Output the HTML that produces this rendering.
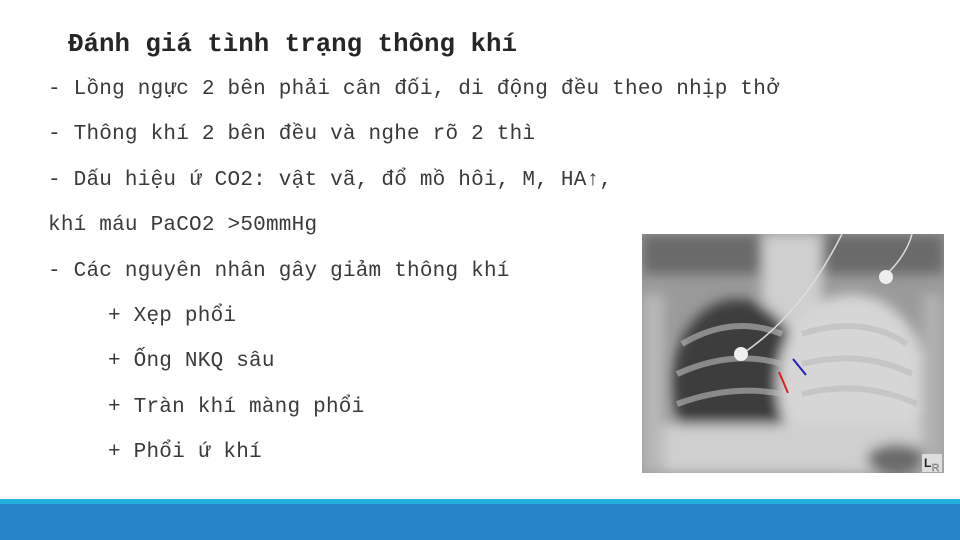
<!DOCTYPE html>
<html><head><meta charset="utf-8"><style>
body{margin:0;width:960px;height:540px;background:#fff;position:relative;overflow:hidden;font-family:"Liberation Mono","DejaVu Sans Mono",monospace;color:#3a3a3a}
.t{position:absolute;left:68px;top:30px;font-size:25.8px;font-weight:bold;color:#262626;white-space:pre}
.l{position:absolute;font-size:21px;white-space:pre;line-height:24px;letter-spacing:0.22px}
.bar1{position:absolute;left:0;top:499px;width:960px;height:5px;background:#27aee0}
.bar2{position:absolute;left:0;top:504px;width:960px;height:36px;background:#2683c6}
</style></head><body>
<div class="t">Đánh giá tình trạng thông khí</div>
<div class="l" style="left:48px;top:78px">- Lồng ngực 2 bên phải cân đối, di động đều theo nhịp thở</div>
<div class="l" style="left:48px;top:123px">- Thông khí 2 bên đều và nghe rõ 2 thì</div>
<div class="l" style="left:48px;top:169px">- Dấu hiệu ứ CO2: vật vã, đổ mồ hôi, M, HA↑,</div>
<div class="l" style="left:48px;top:214px">khí máu PaCO2 &gt;50mmHg</div>
<div class="l" style="left:48px;top:260px">- Các nguyên nhân gây giảm thông khí</div>
<div class="l" style="left:108px;top:305px">+ Xẹp phổi</div>
<div class="l" style="left:108px;top:350px">+ Ống NKQ sâu</div>
<div class="l" style="left:108px;top:396px">+ Tràn khí màng phổi</div>
<div class="l" style="left:108px;top:441px">+ Phổi ứ khí</div>
<svg style="position:absolute;left:642px;top:234px" width="302" height="239" viewBox="0 0 302 239">
<defs>
<filter id="b"><feGaussianBlur stdDeviation="6"/></filter>
</defs>
<rect width="302" height="239" fill="#9a9a9a"/>
<g filter="url(#b)">
<rect x="0" y="0" width="302" height="40" fill="#6a6a6a"/>
<rect x="120" y="0" width="60" height="239" fill="#cfcfcf"/>
<ellipse cx="95" cy="150" rx="65" ry="85" fill="#3e3e3e"/>
<ellipse cx="210" cy="150" rx="75" ry="90" fill="#d6d6d6"/>
<rect x="20" y="190" width="270" height="49" fill="#cfcfcf"/>
<ellipse cx="255" cy="225" rx="30" ry="15" fill="#6a6a6a"/>
<rect x="0" y="60" width="22" height="179" fill="#b8b8b8"/>
<rect x="280" y="60" width="22" height="179" fill="#b0b0b0"/>
</g>
<g stroke="#bdbdbd" stroke-width="6" fill="none" opacity="0.6">
<path d="M40 110 Q90 80 140 100"/><path d="M35 140 Q90 115 140 130"/><path d="M35 170 Q90 150 140 160"/>
<path d="M160 100 Q220 80 265 110"/><path d="M160 130 Q220 115 270 140"/><path d="M160 160 Q220 145 275 170"/>
</g>
<path d="M100 120 Q160 80 200 0" stroke="#ddd" stroke-width="1.5" fill="none"/>
<path d="M245 40 Q265 20 270 0" stroke="#ddd" stroke-width="1.5" fill="none"/>
<circle cx="99" cy="120" r="7" fill="#eee"/>
<circle cx="244" cy="43" r="7" fill="#eee"/>
<line x1="146" y1="159" x2="137" y2="138" stroke="#e02020" stroke-width="2"/>
<line x1="164" y1="141" x2="151" y2="125" stroke="#2020c0" stroke-width="2"/>
<rect x="280" y="220" width="20" height="18" fill="#ddd"/>
<text x="282" y="233" font-size="12" font-family="Liberation Sans" font-weight="bold" fill="#222">L</text>
<text x="290" y="237" font-size="10" font-family="Liberation Sans" fill="#fff" stroke="#555" stroke-width="0.5">R</text>
</svg>
<div class="bar1"></div><div class="bar2"></div>
</body></html>
